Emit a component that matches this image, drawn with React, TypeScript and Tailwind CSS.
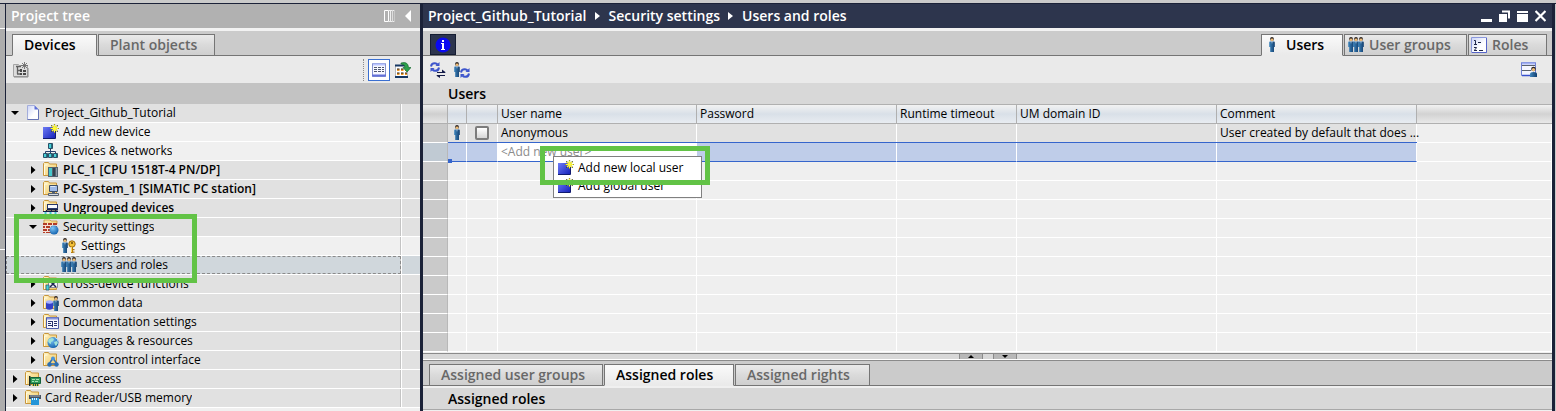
import React from "react";

type IconProps = { className?: string };

const Svg = ({ children, w = 16, h = 16 }: { children: React.ReactNode; w?: number; h?: number }) => (
  <svg width={w} height={h} viewBox={`0 0 ${w} ${h}`} aria-hidden="true" className="shrink-0">
    {children}
  </svg>
);

const Gradients = () => (
  <svg width="0" height="0" className="absolute" aria-hidden="true">
    <defs>
      <linearGradient id="blueBox" x1="0" y1="0" x2="1" y2="1">
        <stop offset="0" stopColor="#6d7bf5" />
        <stop offset="1" stopColor="#1420b8" />
      </linearGradient>
      <linearGradient id="folder" x1="0" y1="0" x2="1" y2="1">
        <stop offset="0" stopColor="#fff2bd" />
        <stop offset="1" stopColor="#f0c869" />
      </linearGradient>
      <linearGradient id="page" x1="0" y1="0" x2="1" y2="1">
        <stop offset="0" stopColor="#c9d2f6" />
        <stop offset="0.6" stopColor="#ffffff" />
      </linearGradient>
      <linearGradient id="body" x1="0" y1="0" x2="1" y2="0">
        <stop offset="0" stopColor="#3f86bd" />
        <stop offset="1" stopColor="#123e6e" />
      </linearGradient>
      <radialGradient id="globe" cx="0.35" cy="0.3" r="0.8">
        <stop offset="0" stopColor="#7cc4f5" />
        <stop offset="1" stopColor="#0b5aa8" />
      </radialGradient>
    </defs>
  </svg>
);

const Person = ({ x = 0, y = 0 }: { x?: number; y?: number }) => (
  <g transform={`translate(${x} ${y})`}>
    <circle cx="3" cy="2" r="1.9" fill="#2b2320" />
    <circle cx="3" cy="2.8" r="1.4" fill="#f0bd77" />
    <path d="M.2 5.500Q.2 4.500 1 4.500h4q.8 0 .8 1v4.500H5v5H1.200v-5H.2z" fill="url(#body)" />
    <path d="M2.500 4.500h1L3 7z" fill="#e8f1fa" />
  </g>
);

const Folder = () => (
  <>
    <path d="M.5 13.500v-12l1-1h4l1 1.500h7v11.500z" fill="url(#folder)" stroke="#c8963c" />
    <path d="M1.500 13V3h3" fill="none" stroke="#fffbe6" />
  </>
);

const Spark = ({ x = 7, y = 0 }: { x?: number; y?: number }) => (
  <g transform={`translate(${x} ${y})`}>
    <path d="M4.500 0v9M0 4.500h9M1.300 1.300l6.400 6.400M7.700 1.300L1.300 7.700" stroke="#3c4020" strokeWidth="1.200" />
    <path d="M4.500 .5v8M.5 4.500h8M2 2l5 5M7 2L2 7" stroke="#fff833" strokeWidth="1.200" />
  </g>
);

const AddIcon = () => (
  <Svg>
    <path d="M0 3h12v12H0z" fill="url(#blueBox)" />
    <path d="M0 14.500h12.500V7" stroke="#101a70" fill="none" />
    <Spark />
  </Svg>
);
const ProjectIcon = () => (
  <Svg>
    <path d="M2.500 .5h7l4 4v10h-11z" fill="url(#page)" stroke="#a3addb" />
    <path d="M9.500 .5v4h4z" fill="#5d6fd8" />
    <path d="M2.500 14.500h11v-10" stroke="#6573b4" fill="none" />
  </Svg>
);
const NetworkIcon = () => (
  <Svg>
    <path d="M7.500 6v3M2.500 11V8.500h10V11M7.500 8v3" fill="none" stroke="#27406c" />
    <path d="M5.500.5h4v5h-4zM.5 10.500h4v4h-4zM5.500 10.500h4v4h-4zM10.500 10.500h4v4h-4z" fill="#48cfd6" stroke="#2a5068" />
    <path d="M8.500 1v4M3.500 11v3M8.500 11v3M13.500 11v3" stroke="#27707c" />
  </Svg>
);
const PlcIcon = () => (
  <Svg>
    <Folder />
    <path d="M5 5h10v10H5z" fill="#546270" />
    <path d="M6 6h3v8H6z" fill="#46c8cc" />
    <path d="M10 6h2v8h-2z" fill="#33424e" />
    <path d="M13 6h1v8h-1z" fill="#8b9aa6" />
  </Svg>
);
const PcIcon = () => (
  <Svg>
    <Folder />
    <path d="M6.500 4.500h8v6h-8z" fill="#9db9e8" stroke="#3c4c64" />
    <path d="M7.500 5.500h5" stroke="#dfeafc" />
    <path d="M9 11h3v1.500H9z" fill="#566478" />
    <path d="M5.500 12.500h10v2h-10z" fill="#d5dae2" stroke="#56606e" />
  </Svg>
);
const UngroupedIcon = () => (
  <Svg>
    <Folder />
    <path d="M4 4h11v6H4z" fill="#27376c" />
    <path d="M5 5h9v3H5z" fill="#f7faff" />
    <path d="M0 11.500h15v3H0z" fill="#e8edf2" />
    <path d="M4 9h11v1.500H4zM0 11h15v1H0zM3 10h1v2H3zM8 10h1v2H8zM12 10h1v2h-1z" fill="#17234a" />
    <path d="M1.500 12h2v3h-2zM6.500 12h2v3h-2zM11.500 12h2v3h-2z" fill="#44c9d0" />
  </Svg>
);
const SecurityIcon = () => (
  <Svg>
    <path d="M1 4V1h6l1 1h6v3H1z" fill="url(#folder)" stroke="#c8963c" strokeWidth=".8" />
    <path d="M0 4h14v10H0z" fill="#b23b26" />
    <path d="M0 6.500h14M0 9.500h14M0 12.500h14M4.500 4v2M9.500 4v2M2.500 7v2M7.500 7v2M4.500 10v2M2.500 13v1" stroke="#f3dfd5" />
    <circle cx="11" cy="11" r="4.500" fill="url(#globe)" />
  </Svg>
);
const SettingsIcon = () => (
  <Svg>
    <Person x={1} y={0} />
    <path d="M10 9h2v6h-2zM12 11h1.500v1.300H12zM12 13.500h1.500v1.300H12z" fill="#b47b10" />
    <circle cx="11" cy="6" r="3.200" fill="#f2c038" stroke="#9a6a10" />
    <circle cx="11" cy="5" r="1" fill="#6c4a0c" />
    <path d="M10.500 9v5" stroke="#ffd95e" />
  </Svg>
);
const GroupIcon = () => (
  <Svg>
    <Person x={0} />
    <Person x={5} />
    <Person x={10} />
  </Svg>
);
const PersonIcon = () => (
  <Svg w={6}>
    <Person />
  </Svg>
);
const CrossIcon = () => (
  <Svg>
    <Folder />
    <path d="M5.500 3.500h9v8h-9z" fill="#f4f5f8" stroke="#8c8c98" />
    <path d="M7 5l6 6M13 5l-6 6" stroke="#1c2450" strokeWidth="1.500" />
    <path d="M3 9h3v5H3z" fill="#48cfd6" stroke="#2a6078" strokeWidth=".8" />
  </Svg>
);
const CommonIcon = () => (
  <Svg>
    <Folder />
    <path d="M3 7v6.500q3 2.500 7 0V7z" fill="#3542c8" />
    <ellipse cx="6.500" cy="7" rx="3.500" ry="1.700" fill="#a8b2ff" />
    <Person x={10} y={1} />
  </Svg>
);
const DocIcon = () => (
  <Svg>
    <Folder />
    <path d="M3.500 3.500h12v11h-12z" fill="#f7f8ff" stroke="#4c5ba8" />
    <path d="M4 4.500h11" stroke="#8794dc" strokeWidth="2" />
    <path d="M5 7.500h4M5 9.500h3M5 11.500h4M11 7.500h3M11 9.500h3M11 11.500h3M9.500 7v6" stroke="#28336c" />
  </Svg>
);
const LanguageIcon = () => (
  <Svg>
    <Folder />
    <circle cx="10" cy="9.500" r="5.500" fill="url(#globe)" />
    <path d="M6 6l3-1 2 1-1 2-2 1v2l-2-1-1-2zM11 9l3-1 1 2-2 3-1-1z" fill="#9fe2d8" />
    <path d="M12 4.500q3 1 3 4" stroke="#b6e1ff" fill="none" />
  </Svg>
);
const VersionIcon = () => (
  <Svg>
    <Folder />
    <path d="M10 6l-4 6h8z" fill="none" stroke="#2f6cae" strokeWidth="1.500" />
    <circle cx="10" cy="6.500" r="2" fill="#4a94da" />
    <circle cx="6.500" cy="12.500" r="2.200" fill="#2c70b4" />
    <circle cx="13.500" cy="12.500" r="2.200" fill="#2c70b4" />
  </Svg>
);
const OnlineIcon = () => (
  <Svg>
    <Folder />
    <path d="M4 5h1.500v10H4z" fill="#1d2b22" />
    <path d="M5.500 6.500h10v6h-10z" fill="#2f9a58" stroke="#14603a" />
    <path d="M7 13h7v2H7z" fill="#d5b845" />
    <path d="M7 8.500h3M11 8.500h3M7 10.500h2M10 10.500h3" stroke="#a5e0b4" />
    <path d="M8.500 13v2M10.500 13v2M12.500 13v2" stroke="#17603b" />
  </Svg>
);
const CardIcon = () => (
  <Svg>
    <Folder />
    <path d="M4 5h12v4H4z" fill="#48525f" />
    <path d="M5 6h10" stroke="#a5afbb" />
    <path d="M6 8h8v7H6z" fill="#2495d8" />
    <path d="M7.500 8v2M9.500 8v2M11.500 8v2" stroke="#e4f4ff" />
  </Svg>
);
const NewFolderIcon = () => (
  <Svg>
    <path d="M.5 2.500h5l1 1h8v11H.5z" fill="#dcdcdc" stroke="#a5a5a5" />
    <path d="M1 15h14V6" stroke="#858585" fill="none" />
    <path d="M3 4.500h5M4.500 5v7M4 8.500h4M4 12h4" stroke="#606060" strokeWidth="1.300" />
    <path d="M7 7h2v3H7zM10 8h3v2h-3zM7 11h2v2H7zM10 11h3v2h-3z" fill="#484848" />
    <path d="M11.500 0v7M8 3.500h7M9 1l5 5M14 1L9 6" stroke="#6e6e6e" strokeWidth=".9" />
  </Svg>
);
const ListViewIcon = () => (
  <Svg>
    <path d="M1.500 1.500h13v13h-13z" fill="#f7f8ff" stroke="#8592cf" />
    <path d="M2 2.500h12" stroke="#b9c4ff" strokeWidth="2" />
    <path d="M3 5.500h3M7 5.500h3M11 5.500h2M3 7.500h3M7 7.500h3M11 7.500h2M3 9.500h3M7 9.500h3M11 9.500h2" stroke="#4e566f" />
    <path d="M1 13.500h14" stroke="#6370d8" strokeWidth="2" />
  </Svg>
);
const GoViewIcon = () => (
  <Svg>
    <path d="M.5 3.500h12v12H.5z" fill="#fff" stroke="#b5b8bf" />
    <path d="M0 3.500h10M0 15h13" stroke="#153763" strokeWidth="2" />
    <path d="M2 8h2.500M6 8h2.500M10 8h2M2 12h2.500M6 12h2.500M10 12h2" stroke="#f09a26" strokeWidth="2" />
    <path d="M2 7h2.500M6 7h2.500M2 11h2.500M6 11h2.500M10 11h2" stroke="#251a10" />
    <path d="M6 1q7-2 7.500 4.500H16l-4 4.500-4-4.500h2Q10 2 6 2z" fill="#2da14b" stroke="#176a30" strokeWidth=".7" />
  </Svg>
);
const Refresh = ({ x = 0, y = 0 }: { x?: number; y?: number }) => (
  <g transform={`translate(${x} ${y})`} fill="none" stroke="#3d55cc" strokeWidth="2">
    <path d="M1 4.500Q1.500 1 5 1.200q1.500.1 2.500 1.300M9 5.500Q8.500 9 5 8.800 3.500 8.700 2.500 7.500" />
    <path d="M9.500 0v4h-4zM.5 10V6h4z" fill="#3d55cc" stroke="none" />
  </g>
);
const SyncIcon = () => (
  <Svg>
    <Refresh />
    <path d="M7 10.500h8M7 13.500h8" stroke="#141b48" strokeWidth="1.200" />
    <path d="M12 7.500l4 3h-4zM10 16l-4-2.500h4z" fill="#141b48" />
  </Svg>
);
const UserSyncIcon = () => (
  <Svg>
    <Person />
    <Refresh x={6} y={6} />
  </Svg>
);
const RolesIcon = () => (
  <Svg>
    <path d="M.5.500h15v15H.5z" fill="url(#page)" stroke="#8b98dd" />
    <path d="M15.500 1v14.500H1" stroke="#5665c8" fill="none" />
    <path d="M3 3.500h1.500v4M3 7.500h3M3 10.500h2.500q0 1-2.500 3h3M7 5.500h3M8 13.500h4" fill="none" stroke="#20284a" />
  </Svg>
);
const UserWindowIcon = () => (
  <Svg>
    <path d="M.5.500h14v13H.5z" fill="#f4f6ff" stroke="#6f80d4" />
    <path d="M1 1.500h13" stroke="#a5b2f2" strokeWidth="2" />
    <path d="M1 3.500h13M1 8.500h9" stroke="#59616c" />
    <path d="M1 13.500h14" stroke="#3850cc" strokeWidth="1.500" />
    <circle cx="12.500" cy="7" r="2.300" fill="#2b2320" />
    <circle cx="12.500" cy="7.700" r="1.600" fill="#f0bd77" />
    <path d="M9 15v-3q0-2 3.500-2t3.500 2v3z" fill="url(#body)" />
  </Svg>
);

type Node = {
  label: string;
  level: number;
  icon: React.ComponentType<IconProps>;
  open?: boolean;
  leaf?: boolean;
  bold?: boolean;
  selected?: boolean;
};

const nodes: Node[] = [
  { label: "Project_Github_Tutorial", level: 0, icon: ProjectIcon, open: true },
  { label: "Add new device", level: 1, icon: AddIcon, leaf: true },
  { label: "Devices & networks", level: 1, icon: NetworkIcon, leaf: true },
  { label: "PLC_1 [CPU 1518T-4 PN/DP]", level: 1, icon: PlcIcon, bold: true },
  { label: "PC-System_1 [SIMATIC PC station]", level: 1, icon: PcIcon, bold: true },
  { label: "Ungrouped devices", level: 1, icon: UngroupedIcon, bold: true },
  { label: "Security settings", level: 1, icon: SecurityIcon, open: true },
  { label: "Settings", level: 2, icon: SettingsIcon, leaf: true },
  { label: "Users and roles", level: 2, icon: GroupIcon, leaf: true, selected: true },
  { label: "Cross-device functions", level: 1, icon: CrossIcon },
  { label: "Common data", level: 1, icon: CommonIcon },
  { label: "Documentation settings", level: 1, icon: DocIcon },
  { label: "Languages & resources", level: 1, icon: LanguageIcon },
  { label: "Version control interface", level: 1, icon: VersionIcon },
  { label: "Online access", level: 0, icon: OnlineIcon },
  { label: "Card Reader/USB memory", level: 0, icon: CardIcon },
];

const indent = ["pl-[3px]", "pl-[21px]", "pl-[39px]"];

const TreeRow = ({ node }: { node: Node }) => {
  const Icon = node.icon;
  const bg = node.selected ? "bg-[#d0d7dc]" : node.leaf ? "bg-[#f0f0f0]" : "bg-[#e1e1e1]";
  return (
    <li role="treeitem" aria-selected={!!node.selected} aria-level={node.level + 1} className={`flex h-[19px] border-b border-white ${bg}`}>
      <div
        className={`flex min-w-0 flex-1 items-center border-r border-[#c4c4c4] ${indent[node.level]} ${
          node.selected ? "outline-1 -outline-offset-1 outline-dashed outline-[#8a8a8a]" : ""
        }`}
      >
        <span className="flex w-4 shrink-0 items-center">
          {!node.leaf && (
            <button type="button" aria-label={`${node.open ? "Collapse" : "Expand"} ${node.label}`} className="flex h-4 w-3 items-center justify-center">
              {node.open ? (
                <Svg w={10} h={10}><path d="M1 3h8L5 7z" fill="#000" /></Svg>
              ) : (
                <Svg w={10} h={10}><path d="M3 1v8l4.500-4z" fill="#000" /></Svg>
              )}
            </button>
          )}
        </span>
        <Icon />
        <span className={`ml-1 truncate leading-[18px] ${node.bold ? "font-semibold" : ""}`}>{node.label}</span>
      </div>
      <div className="w-[19px] border-l border-white" />
    </li>
  );
};

const Tab = ({ children, active, className = "" }: { children: React.ReactNode; active?: boolean; className?: string }) => (
  <button
    type="button"
    role="tab"
    aria-selected={!!active}
    className={`flex h-[22px] items-center border border-[#757575] text-left text-sm font-semibold leading-5 ${
      active
        ? "border-b-[#eaeaea] bg-linear-to-b from-[#fafafa] to-[#eaeaea] text-black"
        : "bg-linear-to-b from-[#eaeaea] via-[#dadada] to-[#cfcfcf] text-[#686868]"
    } ${className}`}
  >
    {children}
  </button>
);

const ProjectTree = () => (
  <section aria-label="Project tree" className="flex w-[414px] shrink-0 flex-col">
    <header className="flex h-6 items-center justify-between bg-[#b1b1b1] pl-[5px] pr-2 text-sm font-semibold text-white">
      <h2>Project tree</h2>
      <div className="flex items-center gap-2">
        <button type="button" aria-label="Show columns">
          <Svg w={12} h={12}>
            <path d="M.5.500h4v11h-4z" fill="none" stroke="#fff" />
            <path d="M5 .5h5M5 11.500h5M6.500 0v12" stroke="#eee" />
            <path d="M8.500 0v12" stroke="#ddd" />
            <path d="M10.500 0v12" stroke="#c8c8c8" />
          </Svg>
        </button>
        <button type="button" aria-label="Collapse panel">
          <Svg w={8} h={12}><path d="M7 0v12L1 6z" fill="#fff" /></Svg>
        </button>
      </div>
    </header>
    <div className="h-[3px] bg-[#f2f2f2]" />
    <div role="tablist" className="flex h-[25px] items-end bg-[#cbcbcb]">
      <div className="h-px w-1.5 bg-[#757575]" />
      <Tab active className="w-[85px] pl-[11px]">Devices</Tab>
      <div className="h-px w-px bg-[#757575]" />
      <Tab className="w-[117px] pl-[11px]">Plant objects</Tab>
      <div className="h-px flex-1 bg-[#757575]" />
    </div>
    <div className="flex h-[27px] items-center bg-[#eaeaea] pl-[7px] pr-[9px]">
      <button type="button" aria-label="New group"><NewFolderIcon /></button>
      <div className="flex-1" />
      <div className="mr-1 h-[22px] border-l border-dotted border-[#8a8a8a]" />
      <button type="button" aria-label="List view" className="mr-[5px] flex h-[22px] w-[22px] items-center justify-center border border-[#3a6fd0] bg-white">
        <ListViewIcon />
      </button>
      <button type="button" aria-label="Open overview"><GoViewIcon /></button>
    </div>
    <div className="h-[21px] bg-[#c3c3c3]" />
    <ul role="tree" aria-label="Project" className="flex-1 bg-[#f0f0f0] text-xs text-black">
      {nodes.map((n) => <TreeRow key={n.label} node={n} />)}
    </ul>
  </section>
);

const Crumb = () => <Svg w={6} h={10}><path d="M0 1v8l5-4z" fill="#fff" /></Svg>;

const cell = "h-[19px] border-b border-r border-white p-0";
const columns = ["User name", "Password", "Runtime timeout", "UM domain ID", "Comment"];
const emptyRows = Array.from({ length: 10 }, (_, i) => i);

const UsersTable = () => (
  <table aria-label="Users" className="w-full table-fixed border-separate border-spacing-0 bg-[#efefef] text-left text-xs leading-[18px]">
    <colgroup>
      <col className="w-[25px]" />
      <col className="w-[19px]" />
      <col className="w-[31px]" />
      <col className="w-[199px]" />
      <col className="w-[200px]" />
      <col className="w-[120px]" />
      <col className="w-[200px]" />
      <col className="w-[200px]" />
      <col />
    </colgroup>
    <thead>
      <tr>
        {["a", "b", "c"].map((k) => (
          <td key={k} className={`h-5 border-y border-r border-[#b0b0b0] bg-linear-to-b p-0 ${k === "a" ? "from-[#efefef] via-[#cfcfcf] to-[#e6e6e6]" : "from-[#f2f2f2] via-[#d6dde6] to-[#e6ebf0]"}`} />
        ))}
        {columns.map((c) => (
          <th key={c} scope="col" className="h-5 border-y border-r border-[#b0b0b0] bg-linear-to-b from-[#f2f2f2] via-[#d9e0e8] to-[#e8ecf1] p-0 pl-[3px] font-normal">{c}</th>
        ))}
        <td className="h-5 border-y border-[#b0b0b0] bg-linear-to-b from-[#f2f2f2] via-[#d2d2d2] to-[#e9e9e9] p-0" />
      </tr>
    </thead>
    <tbody>
      <tr className="bg-[#e1e1e1]">
        <td className={`${cell} border-r-[#b8b8b8] bg-[#cacaca]`} />
        <td className={cell}><div className="flex justify-center"><PersonIcon /></div></td>
        <td className={cell}>
          <div className="flex justify-center">
            <input type="checkbox" aria-label="Select Anonymous" className="h-3.5 w-3.5 appearance-none rounded-xs border-2 border-[#7c7c7c] bg-linear-to-b from-white to-[#d5d5d5]" />
          </div>
        </td>
        <td className={`${cell} pl-[3px]`}>Anonymous</td>
        <td className={cell} />
        <td className={cell} />
        <td className={cell} />
        <td className={`${cell} whitespace-nowrap pl-[3px]`}>User created by default that does ...</td>
        <td className={`${cell} bg-[#efefef]`} />
      </tr>
      <tr className="bg-[#bfcde9]">
        <td className={`${cell} border-r-[#b8b8b8] bg-[#c0cad3]`} />
        {[0, 1, 2, 3, 4, 5, 6].map((i) => (
          <td
            key={i}
            className={`h-[19px] border-r border-b border-r-white border-b-[#3565cc] p-0 shadow-[0_-1px_0_#3565cc] ${i === 2 ? "bg-white pl-[3px] text-[#8c8c8c]" : ""} ${i === 0 ? "relative" : ""}`}
          >
            {i === 0 && <span className="absolute -bottom-0.5 left-0 h-1 w-1 bg-[#3565cc]" />}
            {i === 2 && "<Add new user>"}
          </td>
        ))}
        <td className={`${cell} bg-[#efefef]`} />
      </tr>
      {emptyRows.map((r) => (
        <tr key={r}>
          <td className={`${cell} border-r-[#b8b8b8] bg-[#cacaca]`} />
          {[0, 1, 2, 3, 4, 5, 6, 7].map((i) => <td key={i} className={cell} />)}
        </tr>
      ))}
    </tbody>
  </table>
);

const Editor = () => (
  <main className="flex min-w-0 flex-1 flex-col">
    <header className="flex h-6 items-center justify-between bg-[#2d354d] pl-[5px] pr-1.5 text-sm font-semibold text-white">
      <nav aria-label="Breadcrumb" className="flex items-center gap-2">
        <a href="#project">Project_Github_Tutorial</a>
        <Crumb />
        <a href="#security">Security settings</a>
        <Crumb />
        <a href="#users">Users and roles</a>
      </nav>
      <div className="flex items-center gap-[7px]">
        <button type="button" aria-label="Minimize"><Svg w={11} h={12}><path d="M0 9h11v3H0z" fill="#fff" /></Svg></button>
        <button type="button" aria-label="Float"><Svg w={11} h={12}><path d="M0 4h8v8H0z" fill="#fff" /><path d="M3 1.500h7v7" fill="none" stroke="#fff" strokeWidth="2" /></Svg></button>
        <button type="button" aria-label="Maximize"><Svg w={11} h={12}><path d="M0 1h11v2H0zM0 4h11v8H0z" fill="#fff" /></Svg></button>
        <button type="button" aria-label="Close"><Svg w={11} h={12}><path d="M.5 1l10 10M10.500 1l-10 10" stroke="#fff" strokeWidth="2.200" /></Svg></button>
      </div>
    </header>
    <div className="h-[3px] bg-[#f2f2f2]" />
    <div className="flex h-[25px] items-end border-b border-[#757575] bg-[#cbcbcb]">
      <button type="button" aria-label="Information" className="ml-[7px] flex h-[21px] w-[26px] items-center justify-center border border-[#151d33] bg-[#2d354d]">
        <Svg>
          <circle cx="8" cy="8" r="7.500" fill="#0a0af0" />
          <path d="M7 3h2v2H7zM6 6h3v6h1v1H6v-1h1V7H6z" fill="#fff" />
        </Svg>
      </button>
      <div className="flex-1" />
      <div role="tablist" className="-mb-px flex items-end gap-px pr-[5px]">
        <Tab active className="w-[82px] gap-[11px] pl-[7px]"><PersonIcon />Users</Tab>
        <Tab className="w-[123px] gap-[5px] pl-[3px]"><GroupIcon />User groups</Tab>
        <Tab className="w-[79px] gap-[5px] pl-0.5"><RolesIcon />Roles</Tab>
      </div>
    </div>
    <div className="flex h-[27px] items-center bg-[#eaeaea] pl-[7px] pr-[15px]">
      <button type="button" aria-label="Synchronize" className="mr-2"><SyncIcon /></button>
      <button type="button" aria-label="Update users"><UserSyncIcon /></button>
      <div className="flex-1" />
      <button type="button" aria-label="User details"><UserWindowIcon /></button>
    </div>
    <h3 className="h-[21px] bg-[#d8d8d8] pl-[25px] text-sm font-semibold leading-[21px]">Users</h3>
    <div className="h-[248px] overflow-hidden"><UsersTable /></div>
    <div className="h-px bg-[#efefef]" />
    <div className="flex h-[7px] justify-center gap-2.5 border-b border-t border-b-white border-t-[#8a8a8a] bg-[#d8d8d8]">
      <button type="button" aria-label="Expand upper pane" className="flex h-[5px] w-6 items-center justify-center border-x border-[#8a8a8a] bg-[#b8b8b8]">
        <Svg w={6} h={3}><path d="M0 3h6L3 0z" fill="#000" /></Svg>
      </button>
      <button type="button" aria-label="Expand lower pane" className="flex h-[5px] w-6 items-center justify-center border-x border-[#8a8a8a] bg-[#b8b8b8]">
        <Svg w={6} h={3}><path d="M0 0h6L3 3z" fill="#000" /></Svg>
      </button>
    </div>
    <div role="tablist" className="flex h-[26px] items-end border-t border-[#8a8a8a] bg-[#cbcbcb]">
      <div className="h-px w-1.5 bg-[#757575]" />
      <Tab className="w-[174px] pl-[11px]">Assigned user groups</Tab>
      <div className="h-px w-px bg-[#757575]" />
      <Tab active className="w-[130px] pl-[11px]">Assigned roles</Tab>
      <div className="h-px w-px bg-[#757575]" />
      <Tab className="w-[135px] pl-[11px]">Assigned rights</Tab>
      <div className="h-px flex-1 bg-[#757575]" />
    </div>
    <h3 className="mt-0.5 h-[22px] border-b border-[#a8a8a8] bg-[#d8d8d8] pl-[25px] text-sm font-semibold leading-[21px]">Assigned roles</h3>
  </main>
);

const ContextMenu = () => (
  <div role="menu" className="absolute left-[553px] top-[156px] flex w-[149px] flex-col border border-[#808080] bg-white py-0.5 text-xs">
    {["Add new local user", "Add global user"].map((t) => (
      <button key={t} type="button" role="menuitem" className="flex h-[18px] items-center gap-1 pl-1 text-left leading-[18px]">
        <AddIcon />
        {t}
      </button>
    ))}
  </div>
);

export default function App() {
  return (
    <div className="relative overflow-hidden bg-[#cacaca] pt-[3px] font-['Open_Sans',sans-serif] text-black">
      <Gradients />
      <div className="flex min-h-[calc(100vh-3px)] border-t border-[#1b2238] bg-[#f0f0f0]">
        <div className="flex w-[5px] shrink-0 flex-col">
          <div className="h-6 bg-[#b8b8b8]" />
          <div className="h-px bg-white" />
          <div className="h-[220px] bg-[#adadad]" />
          <div className="h-px bg-white" />
          <div className="flex-1 bg-[#adadad]" />
        </div>
        <div className="w-px shrink-0 bg-[#1b2238]" />
        <ProjectTree />
        <div className="w-[3px] shrink-0 bg-[#1b2238]" />
        <Editor />
        <div className="w-[3px] shrink-0 bg-[#1b2238]" />
        <div className="w-px shrink-0 bg-[#cacaca]" />
      </div>
      <ContextMenu />
      <div className="pointer-events-none absolute left-[14px] top-[214px] h-[69px] w-[183px] border-5 border-[#62c346]" />
      <div className="pointer-events-none absolute left-[540px] top-[146px] h-[39px] w-[170px] border-5 border-[#62c346]" />
    </div>
  );
}
